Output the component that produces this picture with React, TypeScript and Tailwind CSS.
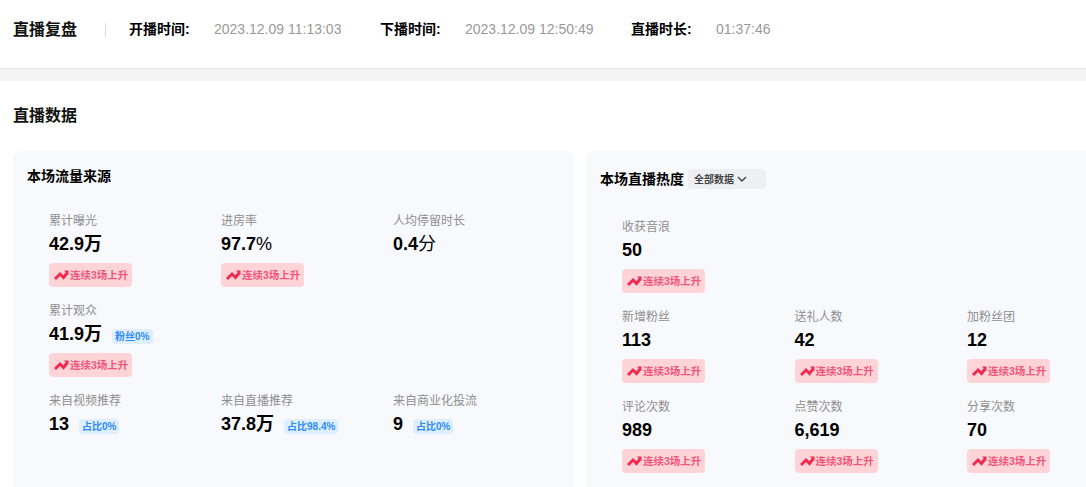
import React from "react";

type Metric = {
  label: string;
  value: string;
  unit?: string;
  unitLight?: boolean;
  tag?: string;
  trend?: boolean;
};

const TrendBadge = () => (
  <div className="mt-[7px] flex h-6 w-[83px] items-center whitespace-nowrap rounded-[4px] bg-[#ffd4d8] pl-[5px] text-[10.5px] font-bold leading-6 text-[#f0567a]">
    <svg width="15" height="11" viewBox="0 0 15 11" fill="none" className="mr-px shrink-0">
      <path d="M1 9 L6 4 L9.5 7.5 L13 3" stroke="#f0294f" strokeWidth="3" />
      <path d="M10 0.5 H14.5 V5 Z" fill="#f0294f" />
    </svg>
    连续3场上升
  </div>
);

const MetricCell = ({ item, wide }: { item: Metric; wide?: boolean }) => (
  <div className={`h-[90px] shrink-0 ${wide ? "w-[172.5px]" : "w-[172px]"}`}>
    <div className="text-xs leading-[18px] text-[#8f8f8f]">{item.label}</div>
    <div className="mt-[2px] flex h-6 items-center">
      <span className="text-lg font-bold leading-6 text-black">
        {item.value}
        {item.unit && (
          <span className={item.unitLight ? "font-normal" : ""}>{item.unit}</span>
        )}
      </span>
      {item.tag && (
        <span className="ml-[10px] mt-[5px] rounded-[4px] bg-[#ddeeff] px-[3px] text-[10px] font-bold leading-[15px] text-[#2f8cf5]">
          {item.tag}
        </span>
      )}
    </div>
    {item.trend && <TrendBadge />}
  </div>
);

const MetricRow = ({ items, wide }: { items: Metric[]; wide?: boolean }) => (
  <div className="flex">
    {items.map((item) => (
      <MetricCell key={item.label} item={item} wide={wide} />
    ))}
  </div>
);

const sourceRows: Metric[][] = [
  [
    { label: "累计曝光", value: "42.9", unit: "万", trend: true },
    { label: "进房率", value: "97.7", unit: "%", unitLight: true, trend: true },
    { label: "人均停留时长", value: "0.4", unit: "分", unitLight: true },
  ],
  [{ label: "累计观众", value: "41.9", unit: "万", tag: "粉丝0%", trend: true }],
  [
    { label: "来自视频推荐", value: "13", tag: "占比0%" },
    { label: "来自直播推荐", value: "37.8", unit: "万", tag: "占比98.4%" },
    { label: "来自商业化投流", value: "9", tag: "占比0%" },
  ],
];

const heatRows: Metric[][] = [
  [{ label: "收获音浪", value: "50", trend: true }],
  [
    { label: "新增粉丝", value: "113", trend: true },
    { label: "送礼人数", value: "42", trend: true },
    { label: "加粉丝团", value: "12", trend: true },
  ],
  [
    { label: "评论次数", value: "989", trend: true },
    { label: "点赞次数", value: "6,619", trend: true },
    { label: "分享次数", value: "70", trend: true },
  ],
];

const times = [
  { label: "开播时间:", value: "2023.12.09 11:13:03" },
  { label: "下播时间:", value: "2023.12.09 12:50:49" },
  { label: "直播时长:", value: "01:37:46" },
];

export default function App() {
  return (
    <div className="h-[487px] w-[1086px] overflow-hidden bg-white font-['Liberation_Sans','Noto_Sans_CJK_SC',sans-serif]">
      <header className="flex h-[69px] items-center border-b border-[#e5e5e5] pb-[9px] pl-[13px]">
        <h1 className="text-base font-bold leading-6 text-[#111]">直播复盘</h1>
        <div className="ml-[28px] mr-[23px] h-[14px] w-px bg-[#dcdcdc]" />
        {times.map((t) => (
          <div key={t.label} className="mb-[2px] flex w-[251px] items-center text-sm leading-5">
            <span className="w-[85px] font-bold text-black">{t.label}</span>
            <span className="text-[#999]">{t.value}</span>
          </div>
        ))}
      </header>
      <div className="h-3 bg-[#f4f4f4]" />

      <h2 className="mt-[23px] pl-[13px] text-base font-bold leading-6 text-[#111]">直播数据</h2>

      <div className="mt-[23px] flex gap-3 pl-[13px]">
        <section className="h-[400px] w-[561px] shrink-0 rounded-lg bg-[#f8f9fc] pl-[14px] pt-[16px]">
          <h3 className="text-sm font-bold leading-[18px] text-black">本场流量来源</h3>
          <div className="mt-[27px] pl-[22px]">
            {sourceRows.map((row) => (
              <MetricRow key={row[0].label} items={row} />
            ))}
          </div>
        </section>

        <section className="h-[400px] w-[561px] shrink-0 rounded-lg bg-[#f8f9fc] pl-[14px] pt-[18px]">
          <div className="flex h-5 items-center">
            <h3 className="text-sm font-bold leading-[18px] text-black">本场直播热度</h3>
            <div className="ml-1 flex h-5 w-[78px] items-center rounded-[4px] bg-[#eeeff3] pl-[6px] text-[10px] font-bold text-[#444]">
              全部数据
              <svg width="10" height="10" viewBox="0 0 10 10" fill="none" className="ml-[3px]">
                <path d="M1 3 L5 7 L9 3" stroke="#444" strokeWidth="1.4" />
              </svg>
            </div>
          </div>
          <div className="mt-[29px] pl-[22px]">
            {heatRows.map((row) => (
              <MetricRow key={row[0].label} items={row} wide />
            ))}
          </div>
        </section>
      </div>
    </div>
  );
}
